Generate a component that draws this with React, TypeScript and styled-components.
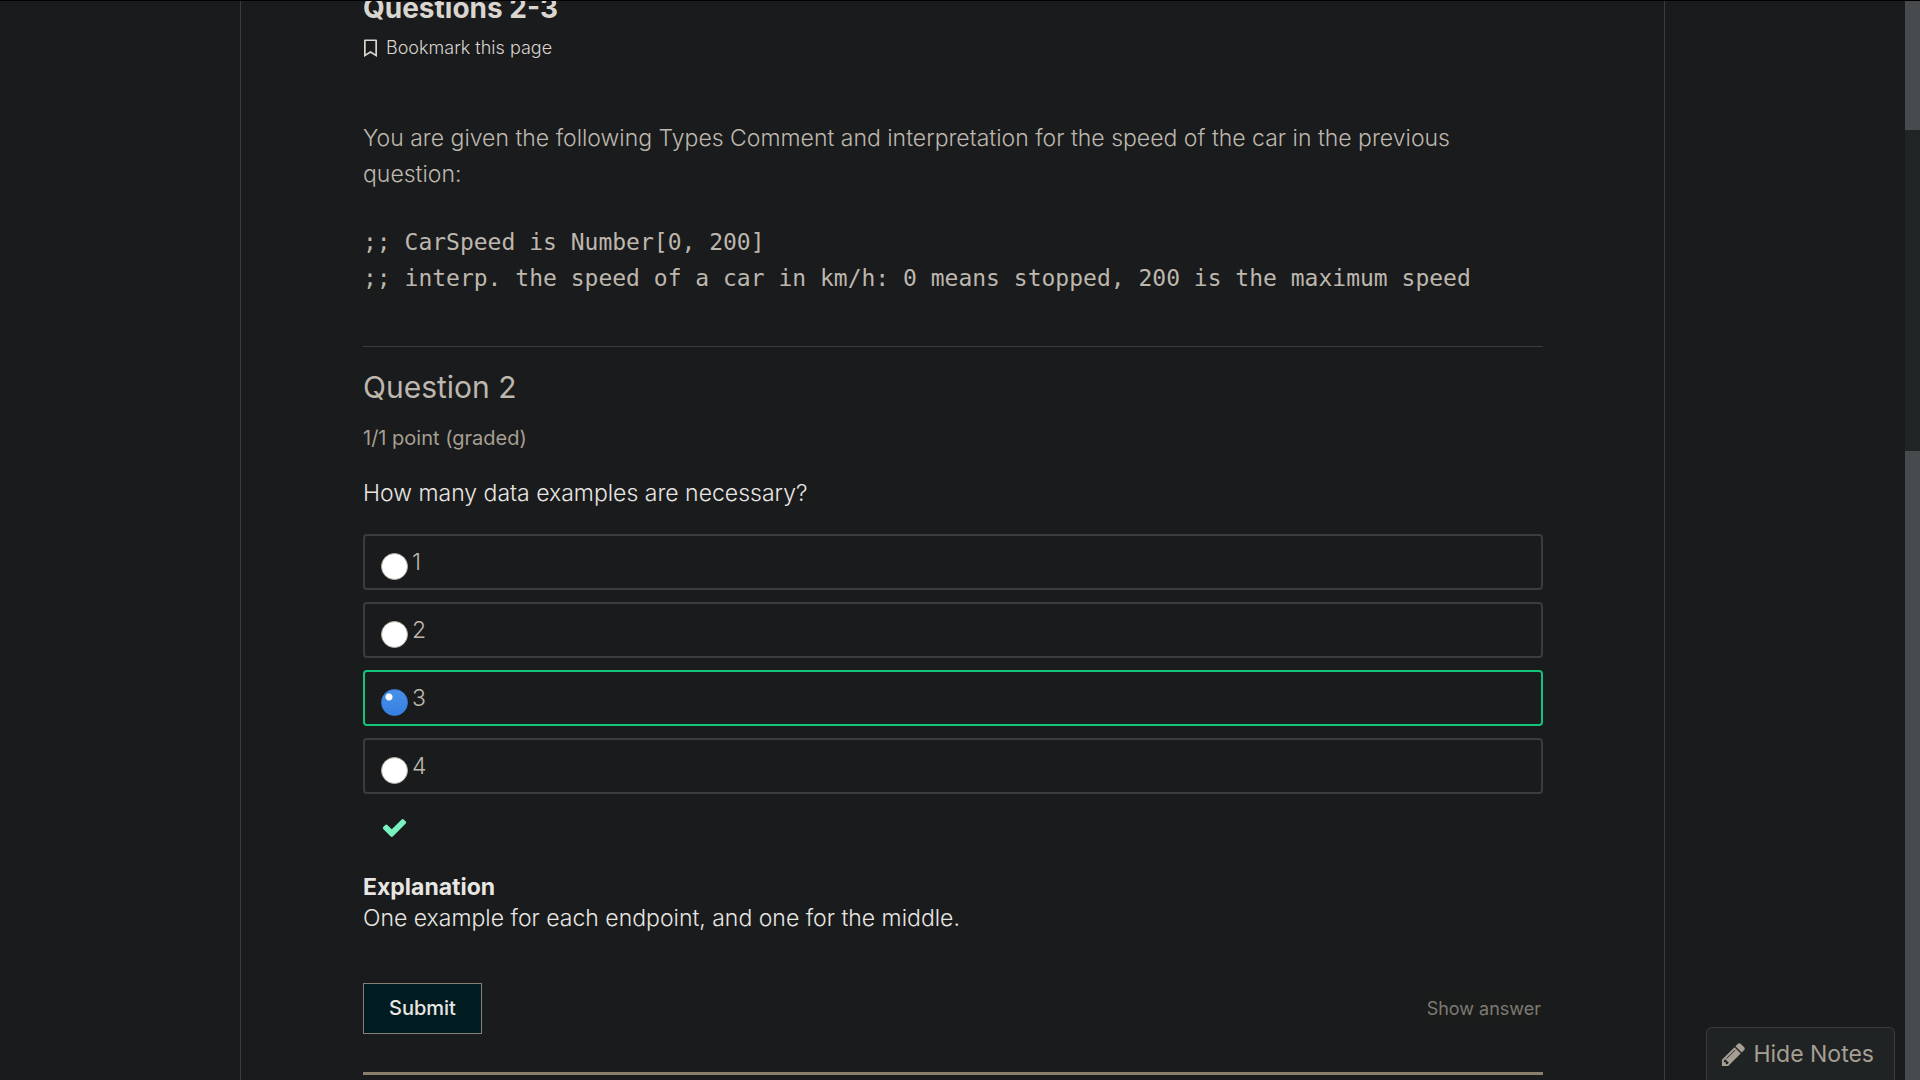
import React, { useState } from "react";
import styled, { createGlobalStyle } from "styled-components";

const color = {
  page: "#1a1b1c",
  panel: "#202324",
  line: "#3a3c3e",
  text: "#bdb7ae",
  muted: "#a69f93",
  bright: "#e8e6e3",
  good: "#13c27b",
};

const GlobalStyle = createGlobalStyle`
  *, *::before, *::after { box-sizing: border-box; }
  body {
    margin: 0;
    background: ${color.page};
    color: ${color.text};
    font-family: Inter, "Liberation Sans", sans-serif;
    font-size: 23px;
    font-weight: 300;
    line-height: 36px;
  }
`;

const Shell = styled.div`
  display: flex;
  height: 100vh;
  overflow: hidden;
  border-top: 1px solid #000;
`;

const Viewport = styled.div`
  display: flex;
  flex: 1;
  min-width: 0;
  padding: 0 240px;
  overflow: hidden;
`;

const Column = styled.main`
  display: flow-root;
  flex: 1;
  min-width: 0;
  padding: 0 121px 0 122px;
  border: solid ${color.line};
  border-width: 0 1px;
`;

const PageTitle = styled.h1`
  margin: -11px 0 0;
  font-size: 28px;
  line-height: 36px;
  font-weight: 700;
  color: #d9d5cf;
`;

const BookmarkButton = styled.button`
  display: flex;
  align-items: center;
  gap: 8px;
  margin-top: 10px;
  padding: 0;
  border: 0;
  background: none;
  color: #d9d5cf;
  font: inherit;
  font-size: 18px;
  line-height: 24px;
`;

const Prompt = styled.p`
  margin: 60px 0 32px;
`;

const Code = styled.pre`
  margin: 0;
  font-family: "DejaVu Sans Mono", monospace;
  font-size: 23px;
  line-height: 36px;
  white-space: pre-wrap;
`;

const Problem = styled.form`
  margin-top: 50px;
  border-top: 1px solid ${color.line};
`;

const ProblemTitle = styled.h2`
  margin: 22px 0 0;
  font-size: 30px;
  line-height: 36px;
  font-weight: 400;
`;

const Progress = styled.p`
  margin: 21px 0 0;
  font-size: 20px;
  font-weight: 400;
  line-height: 24px;
  color: ${color.muted};
`;

const Choices = styled.fieldset`
  display: flex;
  flex-direction: column;
  gap: 12px;
  min-width: 0;
  margin: 25px 0 0;
  padding: 0;
  border: 0;
`;

const Legend = styled.legend`
  margin-bottom: 23px;
  padding: 0;
  color: ${color.bright};
`;

const Choice = styled.label<{ $correct: boolean }>`
  display: flex;
  align-items: center;
  gap: 4px;
  height: 56px;
  padding: 0 16px;
  border: 2px solid ${(p) => (p.$correct ? color.good : color.line)};
  border-radius: 4px;
`;

const Radio = styled.input`
  appearance: none;
  flex: none;
  width: 27px;
  height: 27px;
  margin: 9px 0 0;
  border: 1px solid #b3ada3;
  border-radius: 50%;
  background: #fff;

  &:checked {
    border-color: #3a7ed8;
    background:
      radial-gradient(circle at 7px 7px, #fff 3px, transparent 4px),
      linear-gradient(#4a90e8, #3580e4);
  }
`;

const Status = styled.div`
  display: flex;
  margin: 20px 0 0 18px;
  color: #78f2c0;
`;

const Explanation = styled.section`
  margin-top: 31px;
  line-height: 31px;
  color: ${color.bright};

  h3, p {
    margin: 0;
    font-size: 23px;
  }
`;

const Actions = styled.div`
  display: flex;
  align-items: center;
  justify-content: space-between;
  margin-top: 49px;
  padding-bottom: 38px;
  border-bottom: 3px solid #8a7e6c;
`;

const SubmitButton = styled.button`
  padding: 0 25px;
  border: 1px solid #857f74;
  background: #001c21;
  color: ${color.bright};
  font: inherit;
  font-size: 20px;
  font-weight: 500;
  line-height: 49px;
`;

const AnswerButton = styled.button`
  padding: 2px;
  border: 0;
  background: #1a1c1b;
  color: #7d7a73;
  font: inherit;
  font-size: 18px;
  font-weight: 400;
  line-height: 24px;
`;

const NotesButton = styled.button`
  position: fixed;
  right: 25px;
  bottom: 0;
  display: flex;
  align-items: center;
  gap: 6px;
  height: 53px;
  padding: 0 20px 0 13px;
  border: 1px solid ${color.line};
  border-bottom: 0;
  border-radius: 6px 6px 0 0;
  background: ${color.panel};
  color: ${color.muted};
  font: inherit;
  font-size: 23px;
  font-weight: 400;
`;

const Glyph = styled.svg`
  flex: none;
  width: 27px;
  height: 27px;
  fill: currentColor;
`;

const ScrollTrack = styled.div`
  display: grid;
  grid-template-rows: 129fr 321fr 629fr;
  width: 15px;
  background: #202425;
`;

const ScrollThumb = styled.div`
  background: #474b4d;
  &:last-child { grid-row: 3; }
`;

const choices = ["1", "2", "3", "4"];

export default function App() {
  const [answer, setAnswer] = useState("3");
  return (
    <>
      <GlobalStyle />
      <Shell>
        <Viewport>
          <Column>
            <PageTitle>Questions 2-3</PageTitle>
            <BookmarkButton type="button">
              <svg width="15" height="19" viewBox="0 0 15 19" aria-hidden="true">
                <path fill="currentColor" fillRule="evenodd" d="M2 0.500h11Q14 0.500 14 1.500V18l-6.500-4L1 18V1.500Q1 0.500 2 0.500zM2.700 2v13l4.800-3 4.800 3V2z" />
              </svg>
              Bookmark this page
            </BookmarkButton>
            <Prompt>
              You are given the following Types Comment and interpretation for the speed of the car in the previous
              question:
            </Prompt>
            <Code>{";; CarSpeed is Number[0, 200]\n;; interp. the speed of a car in km/h: 0 means stopped, 200 is the maximum speed"}</Code>
            <Problem onSubmit={(e) => e.preventDefault()}>
              <ProblemTitle>Question 2</ProblemTitle>
              <Progress>1/1 point (graded)</Progress>
              <Choices>
                <Legend>How many data examples are necessary?</Legend>
                {choices.map((c) => (
                  <Choice key={c} $correct={c === "3"}>
                    <Radio type="radio" name="examples" value={c} checked={answer === c} onChange={() => setAnswer(c)} />
                    {c}
                  </Choice>
                ))}
              </Choices>
              <Status role="img" aria-label="Correct">
                <Glyph viewBox="0 0 1792 1792" aria-hidden="true">
                  <path d="M1671 566q0 40-28 68l-724 724-136 136q-28 28-68 28t-68-28l-136-136-362-362q-28-28-28-68t28-68l136-136q28-28 68-28t68 28l294 295 656-657q28-28 68-28t68 28l136 136q28 28 28 68z" />
                </Glyph>
              </Status>
              <Explanation>
                <h3>Explanation</h3>
                <p>One example for each endpoint, and one for the middle.</p>
              </Explanation>
              <Actions>
                <SubmitButton type="submit">Submit</SubmitButton>
                <AnswerButton type="button">Show answer</AnswerButton>
              </Actions>
            </Problem>
          </Column>
        </Viewport>
        <ScrollTrack aria-hidden="true">
          <ScrollThumb />
          <ScrollThumb />
        </ScrollTrack>
      </Shell>
      <NotesButton type="button">
        <Glyph viewBox="0 0 1792 1792" aria-hidden="true">
          <path d="M491 1536l91-91-235-235-91 91v107h128v128h107zm523-928q0-22-22-22-10 0-17 7l-542 542q-7 7-7 17 0 22 22 22 10 0 17-7l542-542q7-7 7-17zm-54-192l416 416-832 832h-416v-416zm683 96q0 53-37 90l-166 166-416-416 166-165q36-38 90-38 53 0 91 38l235 234q37 39 37 91z" />
        </Glyph>
        Hide Notes
      </NotesButton>
    </>
  );
}
